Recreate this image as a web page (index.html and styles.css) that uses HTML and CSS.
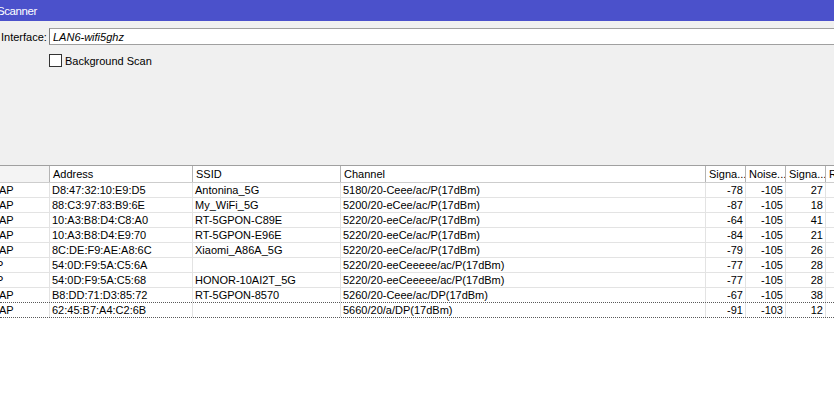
FILE: index.html
```html
<!DOCTYPE html>
<html>
    <head>
        <link rel="stylesheet" href="styles.css">
    </head>
    <body>
        <div class="window">
            <div class="titlebar">Scanner</div>
            <div class="form">
                <div class="field-row">
                    <label class="label">Interface:</label>
                    <input class="field" type="text" value="LAN6-wifi5ghz" readonly>
                </div>
                <label class="check-row"><span class="checkbox"></span>Background Scan</label>
            </div>
            <div class="list">
                <div class="row head">
                    <div class="cell flag"></div>
                    <div class="cell">Address</div>
                    <div class="cell">SSID</div>
                    <div class="cell">Channel</div>
                    <div class="cell">Signa...</div>
                    <div class="cell">Noise...</div>
                    <div class="cell">Signa...</div>
                    <div class="cell">Rate</div>
                </div>
                <div class="row">
                    <div class="cell flag">AP</div>
                    <div class="cell">D8:47:32:10:E9:D5</div>
                    <div class="cell">Antonina_5G</div>
                    <div class="cell">5180/20-Ceee/ac/P(17dBm)</div>
                    <div class="cell num">-78</div>
                    <div class="cell num">-105</div>
                    <div class="cell num">27</div>
                    <div class="cell"></div>
                </div>
                <div class="row">
                    <div class="cell flag">AP</div>
                    <div class="cell">88:C3:97:83:B9:6E</div>
                    <div class="cell">My_WiFi_5G</div>
                    <div class="cell">5200/20-eCee/ac/P(17dBm)</div>
                    <div class="cell num">-87</div>
                    <div class="cell num">-105</div>
                    <div class="cell num">18</div>
                    <div class="cell"></div>
                </div>
                <div class="row">
                    <div class="cell flag">AP</div>
                    <div class="cell">10:A3:B8:D4:C8:A0</div>
                    <div class="cell">RT-5GPON-C89E</div>
                    <div class="cell">5220/20-eeCe/ac/P(17dBm)</div>
                    <div class="cell num">-64</div>
                    <div class="cell num">-105</div>
                    <div class="cell num">41</div>
                    <div class="cell"></div>
                </div>
                <div class="row">
                    <div class="cell flag">AP</div>
                    <div class="cell">10:A3:B8:D4:E9:70</div>
                    <div class="cell">RT-5GPON-E96E</div>
                    <div class="cell">5220/20-eeCe/ac/P(17dBm)</div>
                    <div class="cell num">-84</div>
                    <div class="cell num">-105</div>
                    <div class="cell num">21</div>
                    <div class="cell"></div>
                </div>
                <div class="row">
                    <div class="cell flag">AP</div>
                    <div class="cell">8C:DE:F9:AE:A8:6C</div>
                    <div class="cell">Xiaomi_A86A_5G</div>
                    <div class="cell">5220/20-eeCe/ac/P(17dBm)</div>
                    <div class="cell num">-79</div>
                    <div class="cell num">-105</div>
                    <div class="cell num">26</div>
                    <div class="cell"></div>
                </div>
                <div class="row">
                    <div class="cell flag short">P</div>
                    <div class="cell">54:0D:F9:5A:C5:6A</div>
                    <div class="cell"></div>
                    <div class="cell">5220/20-eeCeeeee/ac/P(17dBm)</div>
                    <div class="cell num">-77</div>
                    <div class="cell num">-105</div>
                    <div class="cell num">28</div>
                    <div class="cell"></div>
                </div>
                <div class="row">
                    <div class="cell flag short">P</div>
                    <div class="cell">54:0D:F9:5A:C5:68</div>
                    <div class="cell">HONOR-10AI2T_5G</div>
                    <div class="cell">5220/20-eeCeeeee/ac/P(17dBm)</div>
                    <div class="cell num">-77</div>
                    <div class="cell num">-105</div>
                    <div class="cell num">28</div>
                    <div class="cell"></div>
                </div>
                <div class="row before-sel">
                    <div class="cell flag">AP</div>
                    <div class="cell">B8:DD:71:D3:85:72</div>
                    <div class="cell">RT-5GPON-8570</div>
                    <div class="cell">5260/20-Ceee/ac/DP(17dBm)</div>
                    <div class="cell num">-67</div>
                    <div class="cell num">-105</div>
                    <div class="cell num">38</div>
                    <div class="cell"></div>
                </div>
                <div class="row sel">
                    <div class="cell flag">AP</div>
                    <div class="cell">62:45:B7:A4:C2:6B</div>
                    <div class="cell"></div>
                    <div class="cell">5660/20/a/DP(17dBm)</div>
                    <div class="cell num">-91</div>
                    <div class="cell num">-103</div>
                    <div class="cell num">12</div>
                    <div class="cell"></div>
                </div>
            </div>
        </div>
    </body>
</html>
```

FILE: styles.css
```css
html, body{
    margin: 0;
    height: 100%;
    overflow: hidden;
    background-color: #ffffff;
}
body{
    font-family: "Liberation Sans", Arial, sans-serif;
    font-size: 11px;
    color: #000000;
}
.window{
    display: flex;
    flex-direction: column;
    height: 393px;
}
.titlebar{
    height: 21px;
    background-color: #4b51cb;
    color: #ffffff;
    font-size: 11.5px;
    line-height: 23px;
    text-indent: -3px;
    letter-spacing: -0.4px;
    white-space: nowrap;
}
.form{
    height: 144px;
    box-sizing: border-box;
    padding-top: 7px;
    background-color: #f0f0f0;
}
.field-row{
    display: flex;
    align-items: center;
    height: 17px;
}
.label{
    width: 49px;
    flex: none;
    padding-left: 1px;
    box-sizing: border-box;
    white-space: nowrap;
}
.field{
    flex: 1;
    min-width: 0;
    height: 17px;
    margin: 0 -6px 0 0;
    box-sizing: border-box;
    padding: 0 3px;
    border: 1px solid #a0a0a0;
    border-left-color: #7a7a7a;
    border-right: none;
    background-color: #ffffff;
    font-family: "Liberation Sans", Arial, sans-serif;
    font-size: 11px;
    font-style: italic;
    color: #000000;
    outline: none;
}
.check-row{
    display: flex;
    align-items: center;
    gap: 3px;
    height: 13px;
    margin-top: 9px;
    margin-left: 49px;
}
.checkbox{
    width: 13px;
    height: 13px;
    box-sizing: border-box;
    border: 1px solid #333333;
    background-color: #ffffff;
}
.list{
    flex: 1;
    border-top: 1px solid #a0a0a0;
    background-color: #ffffff;
}
.row{
    display: grid;
    grid-template-columns: 50px 143px 148px 365px 40px 40px 40px 60px;
    height: 15px;
    box-sizing: border-box;
    border-bottom: 1px solid #e3e3e3;
    line-height: 14px;
    white-space: nowrap;
}
.cell{
    overflow: hidden;
    padding: 0 2px;
    border-right: 1px solid #e3e3e3;
}
.num{
    text-align: right;
}
.flag{
    padding: 0;
    text-indent: -1px;
}
.short{
    text-indent: -4px;
}
.head{
    height: 17px;
    line-height: 16px;
    border-bottom-color: #cdcdcd;
}
.head .cell{
    padding-left: 3px;
    border-right-color: #b4b4b4;
}
.head .flag{
    background-color: #f4f4f4;
}
.before-sel{
    border-bottom: 1px dotted #5a5a5a;
}
.sel{
    border-bottom: 1px dotted #5a5a5a;
}
```
